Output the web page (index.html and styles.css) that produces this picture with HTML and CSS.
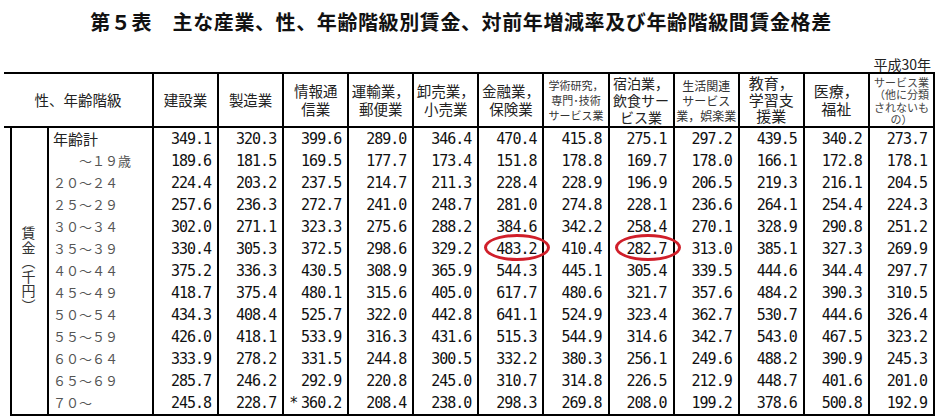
FILE: index.html
```html
<!DOCTYPE html>
<html lang="ja">
<head>
<meta charset="utf-8">
<title>第５表</title>
<link rel="stylesheet" href="styles.css">
</head>
<body>
<div class="page">
  <h1 class="title">第５表　主な産業、性、年齢階級別賃金、対前年増減率及び年齢階級間賃金格差</h1>
  <div class="unit">平成30年</div>
  <table class="wage">
    <colgroup>
      <col class="c-gap"><col class="c-sex"><col class="c-age">
      <col><col><col><col><col><col><col><col><col><col><col><col>
    </colgroup>
    <thead>
      <tr>
        <th class="corner" colspan="3">性、年齢階級</th>
        <th>建設業</th>
        <th>製造業</th>
        <th class="h2">情報通<br>信業</th>
        <th class="h2">運輸業，<br>郵便業</th>
        <th class="h2">卸売業，<br>小売業</th>
        <th class="h2">金融業，<br>保険業</th>
        <th class="small">学術研究，<br>専門･技術<br>サービス業</th>
        <th class="h3">宿泊業，<br>飲食サー<br>ビス業</th>
        <th class="mid">生活関連<br>サービス<br>業，娯楽業</th>
        <th class="big">教育，<br>学習支<br>援業</th>
        <th class="h2 big2">医療，<br>福祉</th>
        <th class="tiny">サービス業<br>（他に分類<br>されないも<br>の）</th>
      </tr>
    </thead>
    <tbody>
      <tr>
        <td class="gap" rowspan="13"></td>
        <td class="sex" rowspan="13"><span class="vert">賃金（千円）</span></td>
        <td class="age total">年齢計</td>
        <td class="num">349.1</td><td class="num">320.3</td><td class="num">399.6</td><td class="num">289.0</td><td class="num">346.4</td><td class="num">470.4</td><td class="num">415.8</td><td class="num">275.1</td><td class="num">297.2</td><td class="num">439.5</td><td class="num">340.2</td><td class="num">273.7</td>
      </tr>
      <tr>
        <td class="age">　　～１９歳</td>
        <td class="num">189.6</td><td class="num">181.5</td><td class="num">169.5</td><td class="num">177.7</td><td class="num">173.4</td><td class="num">151.8</td><td class="num">178.8</td><td class="num">169.7</td><td class="num">178.0</td><td class="num">166.1</td><td class="num">172.8</td><td class="num">178.1</td>
      </tr>
      <tr>
        <td class="age">２０～２４</td>
        <td class="num">224.4</td><td class="num">203.2</td><td class="num">237.5</td><td class="num">214.7</td><td class="num">211.3</td><td class="num">228.4</td><td class="num">228.9</td><td class="num">196.9</td><td class="num">206.5</td><td class="num">219.3</td><td class="num">216.1</td><td class="num">204.5</td>
      </tr>
      <tr>
        <td class="age">２５～２９</td>
        <td class="num">257.6</td><td class="num">236.3</td><td class="num">272.7</td><td class="num">241.0</td><td class="num">248.7</td><td class="num">281.0</td><td class="num">274.8</td><td class="num">228.1</td><td class="num">236.6</td><td class="num">264.1</td><td class="num">254.4</td><td class="num">224.3</td>
      </tr>
      <tr>
        <td class="age">３０～３４</td>
        <td class="num">302.0</td><td class="num">271.1</td><td class="num">323.3</td><td class="num">275.6</td><td class="num">288.2</td><td class="num">384.6</td><td class="num">342.2</td><td class="num">258.4</td><td class="num">270.1</td><td class="num">328.9</td><td class="num">290.8</td><td class="num">251.2</td>
      </tr>
      <tr>
        <td class="age">３５～３９</td>
        <td class="num">330.4</td><td class="num">305.3</td><td class="num">372.5</td><td class="num">298.6</td><td class="num">329.2</td><td class="num marked">483.2<span class="ring"></span></td><td class="num">410.4</td><td class="num marked">282.7<span class="ring"></span></td><td class="num">313.0</td><td class="num">385.1</td><td class="num">327.3</td><td class="num">269.9</td>
      </tr>
      <tr>
        <td class="age">４０～４４</td>
        <td class="num">375.2</td><td class="num">336.3</td><td class="num">430.5</td><td class="num">308.9</td><td class="num">365.9</td><td class="num">544.3</td><td class="num">445.1</td><td class="num">305.4</td><td class="num">339.5</td><td class="num">444.6</td><td class="num">344.4</td><td class="num">297.7</td>
      </tr>
      <tr>
        <td class="age">４５～４９</td>
        <td class="num">418.7</td><td class="num">375.4</td><td class="num">480.1</td><td class="num">315.6</td><td class="num">405.0</td><td class="num">617.7</td><td class="num">480.6</td><td class="num">321.7</td><td class="num">357.6</td><td class="num">484.2</td><td class="num">390.3</td><td class="num">310.5</td>
      </tr>
      <tr>
        <td class="age">５０～５４</td>
        <td class="num">434.3</td><td class="num">408.4</td><td class="num">525.7</td><td class="num">322.0</td><td class="num">442.8</td><td class="num">641.1</td><td class="num">524.9</td><td class="num">323.4</td><td class="num">362.7</td><td class="num">530.7</td><td class="num">444.6</td><td class="num">326.4</td>
      </tr>
      <tr>
        <td class="age">５５～５９</td>
        <td class="num">426.0</td><td class="num">418.1</td><td class="num">533.9</td><td class="num">316.3</td><td class="num">431.6</td><td class="num">515.3</td><td class="num">544.9</td><td class="num">314.6</td><td class="num">342.7</td><td class="num">543.0</td><td class="num">467.5</td><td class="num">323.2</td>
      </tr>
      <tr>
        <td class="age">６０～６４</td>
        <td class="num">333.9</td><td class="num">278.2</td><td class="num">331.5</td><td class="num">244.8</td><td class="num">300.5</td><td class="num">332.2</td><td class="num">380.3</td><td class="num">256.1</td><td class="num">249.6</td><td class="num">488.2</td><td class="num">390.9</td><td class="num">245.3</td>
      </tr>
      <tr>
        <td class="age">６５～６９</td>
        <td class="num">285.7</td><td class="num">246.2</td><td class="num">292.9</td><td class="num">220.8</td><td class="num">245.0</td><td class="num">310.7</td><td class="num">314.8</td><td class="num">226.5</td><td class="num">212.9</td><td class="num">448.7</td><td class="num">401.6</td><td class="num">201.0</td>
      </tr>
      <tr class="last">
        <td class="age">７０～</td>
        <td class="num">245.8</td><td class="num">228.7</td><td class="num"><span class="note">*</span>360.2</td><td class="num">208.4</td><td class="num">238.0</td><td class="num">298.3</td><td class="num">269.8</td><td class="num">208.0</td><td class="num">199.2</td><td class="num">378.6</td><td class="num">500.8</td><td class="num">192.9</td>
      </tr>
    </tbody>
  </table>
</div>
</body>
</html>
```

FILE: styles.css
```css
html, body {
  margin: 0;
  padding: 0;
  background: #fff;
}

body {
  font-family: "Noto Sans CJK JP", sans-serif;
  color: #111;
}

.page {
  width: 940px;
  height: 419px;
  overflow: hidden;
}

.title {
  margin: 0;
  height: 44px;
  line-height: 44px;
  padding-right: 18px;
  text-align: center;
  font-size: 20px;
  letter-spacing: 0.6px;
  font-weight: 700;
  color: #111;
}

.unit {
  box-sizing: border-box;
  height: 28px;
  padding-top: 12px;
  padding-right: 9px;
  text-align: right;
  font-size: 14px;
  line-height: 16px;
  color: #222;
}

.wage {
  margin-left: 4px;
  width: 931px;
  border-collapse: collapse;
  table-layout: fixed;
}

.c-gap { width: 7px; }
.c-sex { width: 37px; }
.c-age { width: 105px; }

.wage th {
  height: 51px;
  padding: 0;
  border: 2px solid #000;
  font-weight: 400;
  font-size: 14.5px;
  line-height: 18px;
  color: #222;
  text-align: center;
  vertical-align: middle;
  white-space: nowrap;
}

.wage th.corner {
  border-left: none;
}

.wage th.h3 {
  font-size: 14px;
  line-height: 17px;
}

.wage th.small {
  font-size: 11px;
  line-height: 15px;
  color: #333;
}

.wage th.mid {
  font-size: 12px;
  line-height: 15px;
  color: #333;
}

.wage th.big {
  font-size: 15px;
  line-height: 16.5px;
}

.wage th.big2 {
  font-size: 15px;
}

.wage th.tiny {
  font-size: 11px;
  line-height: 12.5px;
  color: #444;
  padding-top: 1px;
}

.wage td {
  height: 22px;
  padding: 0;
  border-left: 2px solid #000;
  border-right: 2px solid #000;
  line-height: 22px;
  white-space: nowrap;
}

.wage tr.last td,
.wage td.sex {
  border-bottom: 2px solid #000;
}

.wage td.gap {
  border: none;
}

.wage td.sex {
  text-align: center;
  vertical-align: middle;
  padding-right: 2px;
}

.vert {
  writing-mode: vertical-rl;
  font-size: 14px;
  line-height: 14px;
  letter-spacing: 0.5px;
  color: #333;
}

.wage td.age {
  padding-left: 4px;
  font-size: 13px;
  color: #555;
}

.wage td.age.total {
  font-size: 15px;
  color: #222;
}

.wage td.num {
  text-align: right;
  padding-right: 6px;
  font-family: "DejaVu Sans Mono", monospace;
  font-size: 15px;
  letter-spacing: -1px;
  color: #111;
}

.note {
  float: left;
  margin-left: 5px;
}

.wage td.marked {
  position: relative;
}

.ring {
  position: absolute;
  left: 5px;
  top: -4px;
  width: 66px;
  height: 27px;
  box-sizing: border-box;
  border: 3px solid #d01f2a;
  border-radius: 50%;
}
```
